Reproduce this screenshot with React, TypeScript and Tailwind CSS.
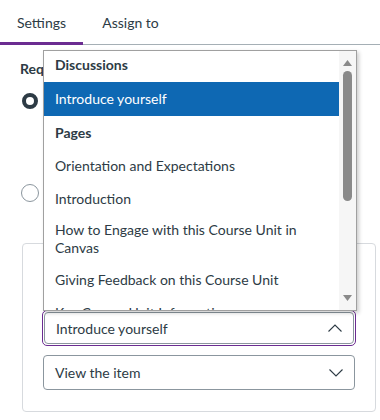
const items: { label: string; header?: boolean; selected?: boolean; wrap?: boolean }[] = [
  { label: "Discussions", header: true },
  { label: "Introduce yourself", selected: true },
  { label: "Pages", header: true },
  { label: "Orientation and Expectations" },
  { label: "Introduction" },
  { label: "How to Engage with this Course Unit in Canvas", wrap: true },
  { label: "Giving Feedback on this Course Unit" },
  { label: "Key Course Unit Information" },
];

function Chevron({ up }: { up?: boolean }) {
  return (
    <svg width="14" height="8" viewBox="0 0 14 8" fill="none" stroke="#2d3b45" strokeWidth="1.1">
      {up ? <polyline points="0.5,7.5 7,1 13.5,7.5" /> : <polyline points="0.5,0.5 7,7 13.5,0.5" />}
    </svg>
  );
}

function DropdownList() {
  return (
    <div className="absolute left-[43px] top-[50px] w-[314px] h-[261px] flex bg-white border border-[#a0a0a0] shadow-[2px_2px_4px_rgba(0,0,0,0.2)] overflow-hidden">
      <div className="flex-1 flex flex-col">
        {items.map((it, i) => (
          <div
            key={it.label}
            className={
              (i === 0 ? "pt-[3px] pb-[7px] " : i === 1 ? "pt-[6px] pb-[7px] " : "py-[6px] ") +
              "px-[11px] text-[14px] " +
              (it.wrap ? "leading-[18px] " : "leading-[21px] ") +
              (it.header
                ? "font-bold text-[#2d3b45]"
                : it.selected
                  ? "text-white bg-[#0e68b3]"
                  : "text-[#2d3b45]")
            }
          >
            {it.label}
          </div>
        ))}
      </div>
      <div className="w-[17px] bg-[#f6f6f6] flex flex-col items-center">
        <svg width="9" height="6" viewBox="0 0 9 6" className="mt-[9px]">
          <path d="M4.5 0 L9 6 L0 6 Z" fill="#8a8a8a" />
        </svg>
        <div className="mt-[5px] w-[9px] h-[130px] rounded-full bg-[#8a8a8a]" />
        <div className="flex-1" />
        <svg width="9" height="6" viewBox="0 0 9 6" className="mb-[9px]">
          <path d="M0 0 L9 0 L4.5 6 Z" fill="#8a8a8a" />
        </svg>
      </div>
    </div>
  );
}

export default function App() {
  return (
    <div className="relative w-[380px] h-[420px] bg-white overflow-hidden font-['Lato',sans-serif] text-[#2d3b45]">
      <div className="flex h-[45px] border-b border-[#a5afb5]">
        <div className="w-[83px] flex items-center justify-center text-[14px] border-b-[3px] border-[#6b2c91] mb-[-1px] pt-[2px]">
          Settings
        </div>
        <div className="w-[95px] flex items-center justify-center text-[14px] pt-[1px]">
          Assign to
        </div>
      </div>

      <div className="px-[20px] pt-[15px]">
        <div className="text-[14px] font-bold leading-[18px]">Requirements</div>
        <div className="mt-[15px] flex items-start gap-[10px] pl-[2px]">
          <div className="w-[16px] h-[16px] rounded-full border-[4px] border-[#2d3b45] shrink-0" />
          <div className="text-[14px] leading-[18px]">Add requirements</div>
        </div>
        <div className="mt-[73px] flex items-start gap-[10px] pl-[1px]">
          <div className="w-[18px] h-[18px] rounded-full border border-[#8b969e] shrink-0" />
          <div className="text-[14px] leading-[18px]">Complete all items</div>
        </div>

        <div className="mt-[41px] ml-[2px] w-[354px] h-[169px] border border-[#d7dade] rounded-[4px] px-[19px] pt-[66px]">
          <div className="h-[36px] rounded-[5px] border border-[#6b2c91] p-px">
            <div className="h-full rounded-[4px] border border-[#8b969e] flex items-center justify-between pl-[11px] pr-[11px]">
              <span className="text-[14px]">Introduce yourself</span>
              <Chevron up />
            </div>
          </div>
          <div className="mt-[9px] mx-px h-[35px] rounded-[4px] border border-[#8b969e] flex items-center justify-between pl-[11px] pr-[11px]">
            <span className="text-[14px]">View the item</span>
            <Chevron />
          </div>
        </div>
      </div>

      <DropdownList />
    </div>
  );
}
